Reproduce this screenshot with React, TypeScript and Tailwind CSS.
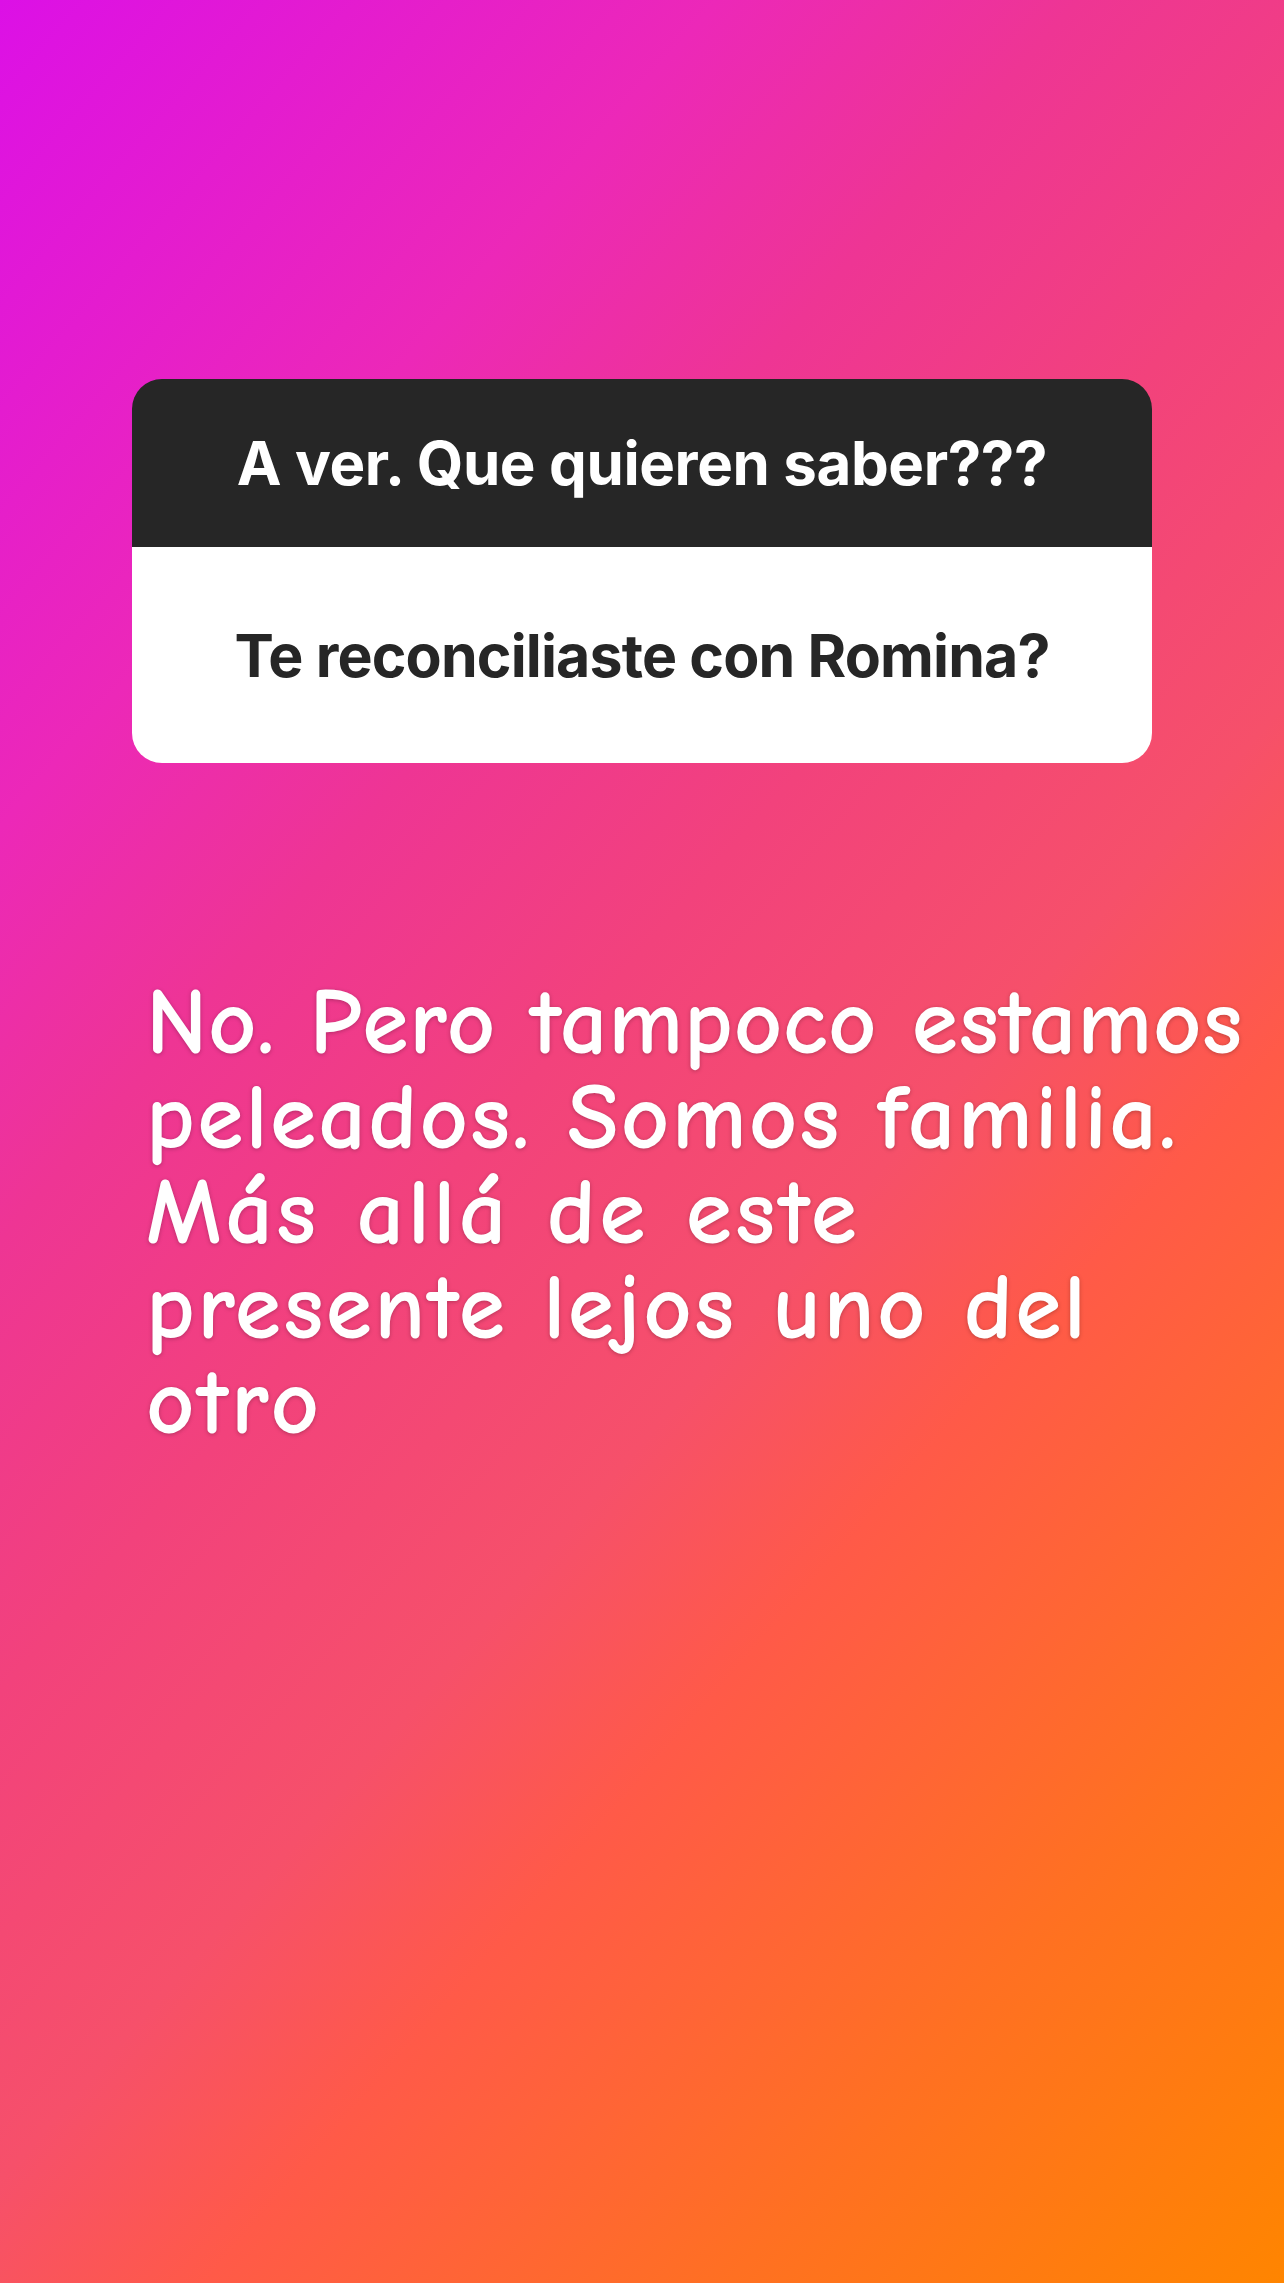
import React from "react";

const lines: { text: string; cls: string }[] = [
  { text: "No. Pero tampoco estamos", cls: "tracking-[0.8px]" },
  { text: "peleados. Somos familia.", cls: "tracking-[2.2px]" },
  { text: "Más allá de este", cls: "tracking-[3.4px]" },
  { text: "presente lejos uno del", cls: "tracking-[2.4px]" },
  { text: "otro", cls: "tracking-[3px]" },
];

export default function App() {
  return (
    <div className="w-[1284px] h-[2283px] overflow-hidden bg-[linear-gradient(131deg,#DC10E6_0%,#EC28B8_22%,#EE3594_33%,#F2427C_45%,#F6506A_58%,#FF5A48_67%,#FF7022_83%,#FF8500_100%)]">
      <div className="pt-[379px] flex flex-col items-center">
        <div className="w-[1020px] rounded-[30px] overflow-hidden">
          <div className="h-[168px] bg-[#262626] flex items-center justify-center">
            <span className="font-['Inter',sans-serif] font-bold text-white text-[60px] leading-none tracking-[-0.4px]">
              A ver. Que quieren saber???
            </span>
          </div>
          <div className="h-[216px] bg-white flex items-center justify-center">
            <span className="font-['Inter',sans-serif] font-bold text-[#262626] text-[59px] leading-none tracking-[-0.85px]">
              Te reconciliaste con Romina?
            </span>
          </div>
        </div>
      </div>
      <div className="mt-[212px] pl-[146px] font-['Comic_Sans_MS','Comic_Neue','Lato',sans-serif] font-bold text-white text-[94px] leading-[95px] [text-shadow:0_1px_4px_rgba(0,0,0,0.25)]">
        {lines.map((l) => (
          <div key={l.text} className={`whitespace-nowrap ${l.cls}`}>
            {l.text}
          </div>
        ))}
      </div>
    </div>
  );
}
